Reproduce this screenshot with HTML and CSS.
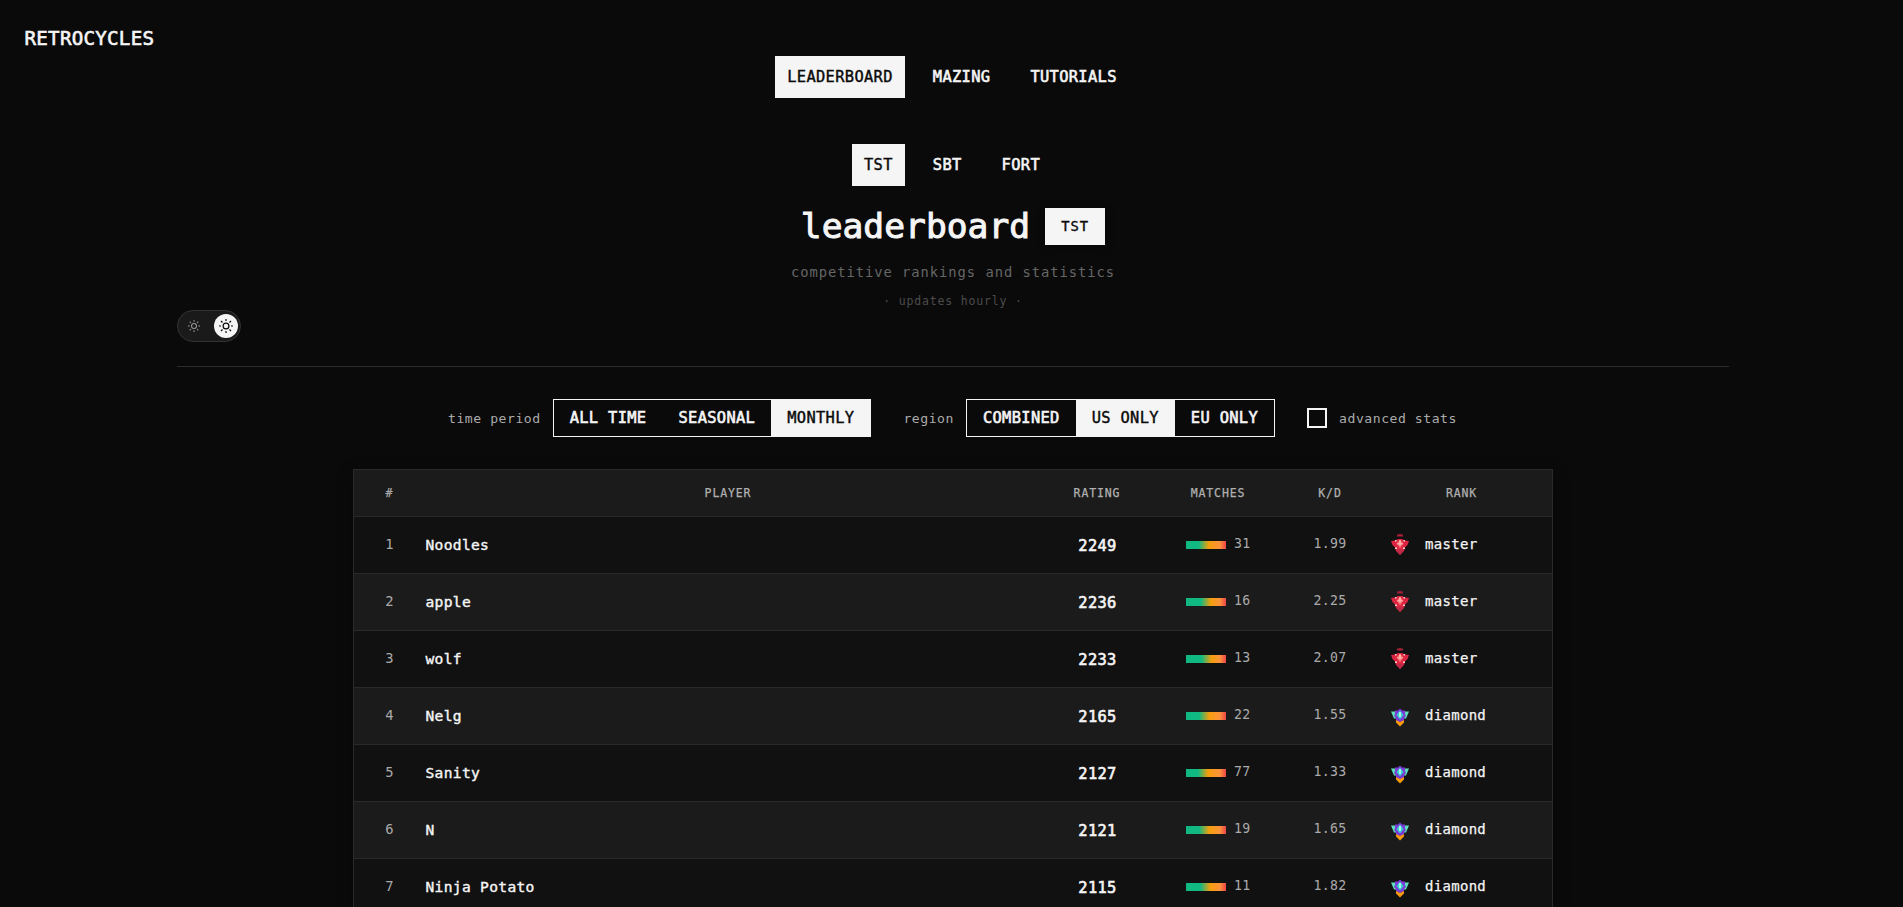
FILE: index.html
```
<!DOCTYPE html>
<html lang="en">
<head>
<meta charset="utf-8">
<title>Retrocycles leaderboard</title>
<link rel="stylesheet" href="styles.css">
</head>
<body>
<svg class="defs" width="0" height="0" aria-hidden="true">
  <symbol id="sun" viewBox="0 0 14 14">
    <circle cx="7" cy="7" r="2.9" fill="none" stroke="currentColor" stroke-width="1.2"/>
    <path d="M7 0v2M7 12v2M0 7h2M12 7h2M2 2l1.500 1.500M10.500 10.500l1.500 1.500M2 12l1.500-1.500M10.500 3.500L12 2" stroke="currentColor" stroke-width="1.2"/>
  </symbol>
  <symbol id="master" viewBox="0 0 24 24">
    <path d="M9 2.200l1.500.6L12 1.400l1.500 1.400 1.500-.6V4.500H9z" fill="#a81f38"/>
    <path d="M3 9l4-.5L10 7h4l3 1.500L21 9l-1.500 4-2.500 2.500L16 19l-4 4-4-4-1-3.500L4.500 13z" fill="#dc2641"/>
    <path d="M8 18h8l-4 5z" fill="#b82a48"/>
    <path d="M12 7.500l3.500 4-3.500 5-3.500-5z" fill="#f8616a"/>
    <path d="M11 8.500h2v5h-2zM9.500 11h5v1.500h-5z" fill="#ffb3a8"/>
    <path d="M7 8h1.500v1.500H7zM15.500 8H17v1.500h-1.500zM7 15.500h2v1.500H7zM15 15.500h2v1.500h-2z" fill="#f3d0d2"/>
  </symbol>
  <symbol id="diamond" viewBox="0 0 24 24">
    <path d="M3 8.500h6v7H6z M21 8.500h-6v7h3z" fill="#5fe0c0"/>
    <path d="M8 16.500l4 2 4-2v3l-4 4-4-4z" fill="#f99a0b"/>
    <path d="M12 5.500l2 2h3v3l.8 3-1.800 1.500v2L12 19 8 17v-2l-1.800-1.500.8-3v-3h3z" fill="#7c3bd6"/>
    <path d="M12 7.500l3.500 4.500-3.500 4.500L8.500 12z" fill="#35d0d0"/>
    <path d="M11 9h2v5h-2z" fill="#a8f5e6"/>
  </symbol>
</svg>

<header class="topbar">
  <a class="brand">RETROCYCLES</a>
  <nav class="nav">
    <a class="nav-link active">LEADERBOARD</a>
    <a class="nav-link">MAZING</a>
    <a class="nav-link">TUTORIALS</a>
  </nav>
  <nav class="nav">
    <a class="nav-link active">TST</a>
    <a class="nav-link">SBT</a>
    <a class="nav-link">FORT</a>
  </nav>
</header>

<section class="hero">
  <div class="title-row">
    <h1 class="title">leaderboard</h1>
    <span class="badge">TST</span>
  </div>
  <p class="subtitle">competitive rankings and statistics</p>
  <p class="updates">· updates hourly ·</p>
  <div class="toggle">
    <svg class="sun-small"><use href="#sun"/></svg>
    <span class="knob"><svg class="sun-large"><use href="#sun"/></svg></span>
  </div>
</section>

<section class="filters">
  <div class="filter">
    <span class="label">time period</span>
    <div class="segments">
      <button class="segment">ALL TIME</button>
      <button class="segment">SEASONAL</button>
      <button class="segment active">MONTHLY</button>
    </div>
  </div>
  <div class="filter">
    <span class="label">region</span>
    <div class="segments">
      <button class="segment">COMBINED</button>
      <button class="segment active">US ONLY</button>
      <button class="segment">EU ONLY</button>
    </div>
  </div>
  <div class="filter">
    <span class="checkbox"></span>
    <span class="label">advanced stats</span>
  </div>
</section>

<main class="table">
  <div class="row head">
    <span class="num">#</span><span>PLAYER</span><span>RATING</span><span>MATCHES</span><span>K/D</span><span>RANK</span>
  </div>
  <div class="row">
    <span class="num">1</span><span class="player">Noodles</span><span class="rating">2249</span>
    <span class="matches"><i class="bar" style="--win:32%"></i><span class="count">31</span></span><span class="kd">1.99</span>
    <span class="rank"><svg class="gem"><use href="#master"/></svg>master</span>
  </div>
  <div class="row">
    <span class="num">2</span><span class="player">apple</span><span class="rating">2236</span>
    <span class="matches"><i class="bar" style="--win:37%"></i><span class="count">16</span></span><span class="kd">2.25</span>
    <span class="rank"><svg class="gem"><use href="#master"/></svg>master</span>
  </div>
  <div class="row">
    <span class="num">3</span><span class="player">wolf</span><span class="rating">2233</span>
    <span class="matches"><i class="bar" style="--win:39%"></i><span class="count">13</span></span><span class="kd">2.07</span>
    <span class="rank"><svg class="gem"><use href="#master"/></svg>master</span>
  </div>
  <div class="row">
    <span class="num">4</span><span class="player">Nelg</span><span class="rating">2165</span>
    <span class="matches"><i class="bar" style="--win:33%"></i><span class="count">22</span></span><span class="kd">1.55</span>
    <span class="rank"><svg class="gem"><use href="#diamond"/></svg>diamond</span>
  </div>
  <div class="row">
    <span class="num">5</span><span class="player">Sanity</span><span class="rating">2127</span>
    <span class="matches"><i class="bar" style="--win:30%"></i><span class="count">77</span></span><span class="kd">1.33</span>
    <span class="rank"><svg class="gem"><use href="#diamond"/></svg>diamond</span>
  </div>
  <div class="row">
    <span class="num">6</span><span class="player">N</span><span class="rating">2121</span>
    <span class="matches"><i class="bar" style="--win:33%"></i><span class="count">19</span></span><span class="kd">1.65</span>
    <span class="rank"><svg class="gem"><use href="#diamond"/></svg>diamond</span>
  </div>
  <div class="row">
    <span class="num">7</span><span class="player">Ninja Potato</span><span class="rating">2115</span>
    <span class="matches"><i class="bar" style="--win:36%"></i><span class="count">11</span></span><span class="kd">1.82</span>
    <span class="rank"><svg class="gem"><use href="#diamond"/></svg>diamond</span>
  </div>
</main>
</body>
</html>
```
FILE: styles.css
```
* { box-sizing: border-box; letter-spacing: 0.0214em; }
html, body { height: 100%; }
body {
  margin: 0;
  overflow: hidden;
  background: #0a0a0a;
  color: #f5f5f5;
  font-family: "DejaVu Sans Mono", "Liberation Mono", monospace;
  font-size: 15.4px;
}
.defs { display: block; }
h1, p { margin: 0; }

/* Medium weight: regular glyphs thickened by a thin outline */
.brand, .nav-link, .title, .badge, .segment, .player, .rating {
  -webkit-text-stroke: 0.6px currentColor;
}
.title { -webkit-text-stroke-width: 1px; }
.nav-link.active, .segment.active, .badge, .player { -webkit-text-stroke-width: 0.4px; }
.rank, .head span { -webkit-text-stroke: 0.25px currentColor; }

.topbar {
  display: flex;
  flex-direction: column;
  align-items: center;
  padding-top: 24px;
}
.brand {
  align-self: flex-start;
  margin-left: 24.5px;
  height: 32px;
  font-size: 19.2px;
  line-height: 29px;
  letter-spacing: 0.24px;
}
.nav { display: flex; gap: 16px; margin: 0 0 46px 1px; }
.nav + .nav { margin-bottom: 22px; }
.nav-link {
  padding: 0 12px;
  line-height: 42px;
}
.nav-link.active { background: #f5f5f5; color: #0a0a0a; }

.hero {
  margin: 0 174px 0 177px;
  height: 159px;
  border-bottom: 1px solid #2a2a2a;
  display: flex;
  flex-direction: column;
  align-items: center;
}
.title-row { display: flex; align-items: center; gap: 15px; height: 37px; }
.title {
  font-size: 34.6px;
  line-height: 39px;
  letter-spacing: 0.03px;
  font-weight: 400;
}
.badge {
  width: 60px;
  height: 37px;
  padding-left: 16px;
  background: #f5f5f5;
  color: #0a0a0a;
  font-size: 13.8px;
  line-height: 36px;
  letter-spacing: 1.05px;
  box-shadow: 0 2px 8px rgba(0, 0, 0, 0.4);
}
.subtitle {
  margin-top: 16px;
  font-size: 13.8px;
  line-height: 22px;
  letter-spacing: 0.95px;
  color: #666;
}
.updates {
  margin-top: 9px;
  font-size: 11.5px;
  line-height: 18px;
  letter-spacing: 0.83px;
  color: #4c4c4c;
}
.toggle {
  align-self: flex-start;
  width: 64px;
  height: 32px;
  padding: 0 2px 0 10px;
  display: flex;
  align-items: center;
  justify-content: space-between;
  background: #1a1a1a;
  border: 1px solid #333;
  border-radius: 16px;
  color: #999;
}
.sun-small { width: 12px; height: 12px; }
.knob {
  width: 24px;
  height: 24px;
  display: flex;
  align-items: center;
  justify-content: center;
  border-radius: 50%;
  background: #f5f5f5;
  color: #0a0a0a;
}
.sun-large { width: 14px; height: 14px; }

.filters {
  display: flex;
  justify-content: center;
  gap: 32px;
  margin: 32px 0 32px 2px;
}
.filter { display: flex; align-items: center; gap: 12px; height: 38px; }
.label { font-size: 13.1px; letter-spacing: 0.54px; color: #aaa; }
.segments { display: flex; height: 38px; border: 1px solid #f5f5f5; }
.segment {
  padding: 0 16px;
  border: 0;
  background: none;
  color: #f5f5f5;
  font: 15.4px/37px "DejaVu Sans Mono", "Liberation Mono", monospace;
}
.segment.active { background: #f5f5f5; color: #0a0a0a; }
.checkbox { width: 20px; height: 20px; border: 2px solid #f5f5f5; }

.table {
  width: 1200px;
  margin: 0 auto 0 353px;
  border: 1px solid #2a2a2a;
  box-shadow: 0 4px 16px rgba(0, 0, 0, 0.3);
}
.row {
  display: grid;
  grid-template-columns: 55px 638px 100px 142px 82px 181px;
  align-items: center;
  height: 57px;
  border-bottom: 1px solid #2a2a2a;
  background: #111;
  text-align: center;
}
.row:nth-child(odd) { background: #1b1b1b; }
.row:nth-child(even) { background: #111; }
.row.head {
  height: 47px;
  font-size: 11.5px;
  background: #1b1b1b;
  color: #b0b0b0;
}
.row:nth-child(n+2):nth-child(odd) { background: #1b1b1b; }
.head span { letter-spacing: 0.88px; }
.num { padding: 0 0 2px 16px; font-size: 13.8px; color: #aaa; }
.head .num { padding-bottom: 0; font-size: 11.5px; }
.player {
  padding: 0 0 2px 16.5px;
  text-align: left;
  font-size: 14.6px;
}
.rating { padding: 1px 0 0 1px; }
.matches {
  display: flex;
  align-items: center;
  gap: 8px;
  padding-left: 39px;
  font-size: 13.2px;
  color: #aaa;
}
.count, .kd { padding-bottom: 3px; }
.bar {
  width: 40px;
  height: 8px;
  background: linear-gradient(90deg, #10b981 var(--win), #f59e0b calc(var(--win) + 25%), #fb923c 85%, #ef4444 100%);
}
.kd { font-size: 13.2px; color: #aaa; }
.rank {
  display: flex;
  align-items: center;
  gap: 13px;
  padding: 0 0 2px 17px;
  font-size: 14px;
}
.gem { width: 24px; height: 24px; }
```
